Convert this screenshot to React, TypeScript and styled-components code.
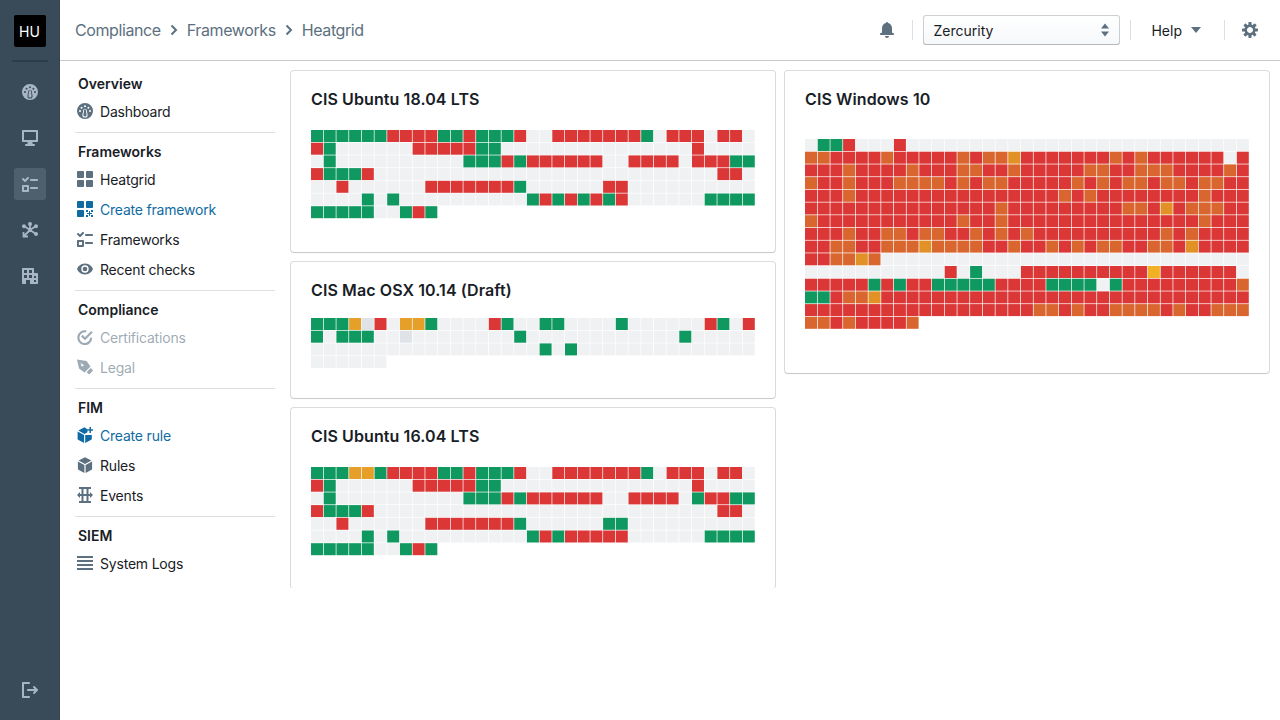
import React from "react";
import styled, { createGlobalStyle } from "styled-components";

const palette = {
  rail: "#394b59",
  railIcon: "#a7b6c2",
  text: "#182026",
  muted: "#5c7080",
  blue: "#106ba3",
  line: "#dde0e3",
};

const cellColors: Record<string, string> = {
  g: "#0f9960",
  r: "#db3737",
  o: "#d9652f",
  a: "#e29127",
  b: "#e69f28",
  y: "#f0b224",
  e: "#eff1f3",
  d: "#dfe3e8",
};

// rows are run-length coded: "3g1r" = three green, one red
const ubuntu18 = [
  "6g4r2g1r3g1r2e7r1g1e3r1e2r1e",
  "1r1g6e5r2g15e1r4e",
  "1e1g10e3g1r1g6r2e4r1e3r2g",
  "1r3g1r27e2r1e",
  "2e1r6e7r1g6e2r10e",
  "4e1g1e1g10e1g1r1g1r1g1r1g1r6e4g",
  "5g2e1g1r1g",
];

const macOsx = [
  "3g1b1d1r1e2b1g4e1r1g2e2g4e1g6e1r1g1e1r",
  "1g1e3g2e1d8e1g12e1g5e",
  "18e1g1e1g14e",
  "6e",
];

const ubuntu16 = [
  "3g2b1g4r2g1r3g1r2e7r1g1e3r1e2r1e",
  "1r1g6e5r2g15e1r4e",
  "1e1g10e3g1r1g6r2e4r1e1g2r2g",
  "1r3g1r27e2r1e",
  "2e1r6e7r1g6e2g10e",
  "4e1g1e1g10e1g1r1g5r6e4g",
  "5g2e1g1r1g",
];

const windows10 = [
  "1e2g1r3e1r27e",
  "2o4r1o5r1o1r2o1a7r1o1r1o6r1e1r",
  "3r1o4r1o3r2o2r1o5r2o2r3o4r1o1r",
  "1o2r1o3r4o1r1o1r2o5r1o1r1o1r2o1r2o1r2o2r",
  "3r1o16r1o1r1o8r1o3r",
  "15r1o9r2o1r1a1r3o2r",
  "1o11r1o2r1o15r1o3r",
  "3r1o2r2o1r2o2r1o1r1o1r1o10r1o1r1o4r",
  "2r2o2r3o1a4o2r1o2r1o1r1o1r2o2r2o1r1a4r",
  "2r2o1a1o29e",
  "11e1r1e1g3e10r1y6r1e",
  "5r1g1r1g2r5g4r4g1e1g9r1o",
  "2g1r2o1a29r",
  "18r2o1r1o2r4o1r1o2r3o",
  "2o1r1o4r1o",
];

const decodeRow = (row: string) =>
  Array.from(row.matchAll(/(\d+)([a-z])/g)).flatMap((m) =>
    Array<string>(Number(m[1])).fill(m[2])
  );

const PITCH = 12.7;
const CELL = 12;

const GlobalStyle = createGlobalStyle`
  html, body {
    margin: 0;
    height: 100%;
    background: #fff;
    font-family: Inter, "Liberation Sans", sans-serif;
    font-size: 14px;
    color: ${palette.text};
    overflow: hidden;
  }
`;

const Shell = styled.div`
  display: flex;
  height: 720px;
  overflow: hidden;
`;

const Rail = styled.aside`
  flex: 0 0 60px;
  box-sizing: border-box;
  display: flex;
  flex-direction: column;
  align-items: center;
  padding: 15px 0 14px;
  background: ${palette.rail};
  border-right: 1px solid #33434f;
`;

const Logo = styled.div`
  display: flex;
  align-items: center;
  justify-content: center;
  width: 32px;
  height: 32px;
  border-radius: 2px;
  background: #000;
  color: #fff;
  font-size: 14px;
`;

const RailDivider = styled.div`
  width: 36px;
  height: 2px;
  margin: 13px 0 14px;
  background: #2d3c47;
`;

const RailButton = styled.div<{ $active?: boolean; $bottom?: boolean }>`
  display: flex;
  align-items: center;
  justify-content: center;
  width: 32px;
  height: 32px;
  margin-bottom: ${(p) => (p.$bottom ? 0 : "14px")};
  margin-top: ${(p) => (p.$bottom ? "auto" : 0)};
  border-radius: 3px;
  color: ${palette.railIcon};
  background: ${(p) => (p.$active ? "rgba(167, 182, 194, 0.2)" : "transparent")};
`;

const Main = styled.div`
  flex: 1;
  min-width: 0;
  display: flex;
  flex-direction: column;
`;

const Header = styled.header`
  flex: 0 0 60px;
  display: flex;
  align-items: center;
  padding: 0 22px 0 15px;
  border-bottom: 1px solid #c8cbce;
`;

const Crumbs = styled.div`
  flex: 1;
  display: flex;
  align-items: center;
  gap: 7px;
  font-size: 16px;
  letter-spacing: -0.4px;
  color: ${palette.muted};
`;

const CrumbArrow = styled.svg`
  width: 12px;
  height: 12px;
  fill: none;
  stroke: ${palette.muted};
  stroke-width: 2;
`;

const BarIcon = styled.svg`
  display: block;
  width: 16px;
  height: 16px;
  fill: ${palette.muted};
`;

const BarDivider = styled.div<{ $left: number; $right: number }>`
  width: 1px;
  height: 20px;
  background: #dcdfe2;
  margin: 0 ${(p) => p.$right}px 0 ${(p) => p.$left}px;
`;

const Select = styled.div`
  box-sizing: border-box;
  display: flex;
  align-items: center;
  justify-content: space-between;
  width: 197px;
  height: 30px;
  padding: 0 10px;
  border-radius: 3px;
  background: linear-gradient(180deg, #fff, #f5f8fa);
  box-shadow: inset 0 0 0 1px rgba(16, 22, 26, 0.2),
    inset 0 -1px 0 rgba(16, 22, 26, 0.1);
`;

const DoubleCaret = styled.svg`
  width: 10px;
  height: 16px;
  fill: ${palette.muted};
`;

const HelpMenu = styled.div`
  display: flex;
  align-items: center;
  gap: 9px;
  padding: 0 23px 0 20px;
`;

const Caret = styled.svg`
  width: 10px;
  height: 6px;
  fill: ${palette.muted};
`;

const Body = styled.div`
  flex: 1;
  min-height: 0;
  display: flex;
`;

const SideNav = styled.nav`
  flex: 0 0 200px;
  padding: 4px 15px 0;
`;

const NavSection = styled.section`
  padding: 9px 0 6px;
  border-bottom: 1px solid ${palette.line};

  &:last-child {
    border-bottom: 0;
  }
`;

const NavHeading = styled.div`
  height: 20px;
  margin-bottom: 2px;
  padding-left: 3px;
  font-weight: 600;
  line-height: 20px;
`;

const NavItem = styled.div<{ $tone?: "link" | "off" }>`
  display: flex;
  align-items: center;
  gap: 7px;
  height: 30px;
  padding-left: 2px;
  letter-spacing: -0.2px;
  color: ${(p) =>
    p.$tone === "link"
      ? palette.blue
      : p.$tone === "off"
      ? "rgba(92, 112, 128, 0.6)"
      : palette.text};

  svg {
    display: block;
    flex: 0 0 16px;
    width: 16px;
    height: 16px;
    fill: ${(p) =>
      p.$tone === "link"
        ? palette.blue
        : p.$tone === "off"
        ? "rgba(92, 112, 128, 0.6)"
        : palette.muted};
  }
`;

const Content = styled.main`
  flex: 1;
  display: flex;
  align-items: flex-start;
  gap: 10px;
  padding: 10px 0 0 1px;
`;

const Column = styled.div`
  flex: 0 0 484px;
  display: flex;
  flex-direction: column;
  gap: 10px;
`;

const Card = styled.article<{ $cut?: boolean }>`
  box-sizing: border-box;
  padding: 18px 20px 0;
  border-radius: 3px;
  background: #fff;
  box-shadow: 0 0 0 1px rgba(16, 22, 26, 0.15),
    0 1px 1px rgba(16, 22, 26, 0.1);
  clip-path: ${(p) => (p.$cut ? "inset(-2px -2px 1px -2px)" : "none")};
`;

const CardTitle = styled.h3`
  margin: 0;
  font-size: 16px;
  font-weight: 600;
  line-height: 20px;
  letter-spacing: 0.1px;
`;

const Grid = styled.svg<{ $top: number; $bottom: number }>`
  display: block;
  width: 445px;
  margin: ${(p) => p.$top}px -1px ${(p) => p.$bottom}px 0;
`;

const HeatGrid = ({ rows, top, bottom }: { rows: string[]; top: number; bottom: number }) => {
  const h = rows.length * PITCH;
  return (
    <Grid $top={top} $bottom={bottom} viewBox={`0 0 445 ${h}`} height={h}>
      {rows.map((row, y) =>
        decodeRow(row).map((c, x) => (
          <rect
            key={`${y}-${x}`}
            x={x * PITCH}
            y={y * PITCH}
            width={CELL}
            height={CELL}
            fill={cellColors[c]}
          />
        ))
      )}
    </Grid>
  );
};

const dot = (x: number, y: number) => `M${x - 1} ${y}a1 1 0 102 0 1 1 0 10-2 0z`;

const icons: Record<string, React.ReactNode> = {
  dashboard: (
    <>
      <path
        fillRule="evenodd"
        d={`M8 0a8 8 0 100 16A8 8 0 008 0z${dot(3, 8)}${dot(4.6, 4.8)}${dot(8, 3.2)}${dot(11.4, 4.8)}${dot(13, 8)}M6.4 6.500h3.200l1 5.500a2.600 2.600 0 01-5.200 0z`}
      />
      <path d="M7.100 7h1.800l.7 5a1.600 1.600 0 01-3.200 0z" />
    </>
  ),
  desktop: (
    <path d="M15 0H1C.45 0 0 .45 0 1v10c0 .55.45 1 1 1h4.750l-.5 2H4c-.55 0-1 .45-1 1s.45 1 1 1h8c.55 0 1-.45 1-1s-.45-1-1-1h-1.250l-.5-2H15c.55 0 1-.45 1-1V1c0-.55-.45-1-1-1zm-1 10H2V2h12v8z" />
  ),
  form: (
    <path d="M2 11v3h3v-3H2zm-1-2h5c.55 0 1 .45 1 1v5c0 .55-.45 1-1 1H1c-.55 0-1-.45-1-1v-5c0-.55.45-1 1-1zm5.710-7.710C6.530 1.110 6.280 1 6 1s-.53.11-.71.29L3 3.590l-1.290-1.300C1.530 2.110 1.280 2 1 2a1.003 1.003 0 00-.71 1.710l2 2c.18.18.43.29.71.29s.53-.11.71-.29l3-3c.18-.18.29-.43.29-.71s-.11-.53-.29-.71zM9 5h6c.55 0 1-.45 1-1s-.45-1-1-1H9c-.55 0-1 .45-1 1s.45 1 1 1zm6 6H9c-.55 0-1 .45-1 1s.45 1 1 1h6c.55 0 1-.45 1-1s-.45-1-1-1z" />
  ),
  graph: (
    <>
      <circle cx="8" cy="2" r="2" />
      <circle cx="2" cy="4.200" r="2" />
      <circle cx="14" cy="4.200" r="2" />
      <circle cx="14" cy="12" r="2" />
      <circle cx="8" cy="8" r="1.800" />
      <path
        d="M8 2v6M2 4l6 4 6-4M8 8l6 4M8 8l-6 6M1.500 10v4.500h4.500"
        stroke="currentColor"
        strokeWidth="1.800"
        fill="none"
      />
    </>
  ),
  office: (
    <path d="M15 5h-3V1c0-.55-.45-1-1-1H1C.45 0 0 .45 0 1v14c0 .55.45 1 1 1h3v-4h4v4h7c.55 0 1-.45 1-1V6c0-.55-.45-1-1-1zM5 10H2V7h3v3zm0-5H2V2h3v3zm5 5H7V7h3v3zm0-5H7V2h3v3zm4 9h-2v-2h2v2zm0-4h-2V8h2v2z" />
  ),
  logout: (
    <path d="M7 14H2V2h5c.55 0 1-.45 1-1s-.45-1-1-1H1C.45 0 0 .45 0 1v14c0 .55.45 1 1 1h6c.55 0 1-.45 1-1s-.45-1-1-1zm8.710-6.710l-3-3a1.003 1.003 0 00-1.420 1.420L12.590 7H6c-.55 0-1 .45-1 1s.45 1 1 1h6.590l-1.290 1.290c-.19.18-.3.43-.3.71a1.003 1.003 0 001.710.71l3-3c.18-.18.29-.43.29-.71 0-.28-.11-.53-.29-.71z" />
  ),
  grid: (
    <path d="M1 0h5c.55 0 1 .45 1 1v5c0 .55-.45 1-1 1H1c-.55 0-1-.45-1-1V1c0-.55.45-1 1-1zm9 0h5c.55 0 1 .45 1 1v5c0 .55-.45 1-1 1h-5c-.55 0-1-.45-1-1V1c0-.55.45-1 1-1zM1 9h5c.55 0 1 .45 1 1v5c0 .55-.45 1-1 1H1c-.55 0-1-.45-1-1v-5c0-.55.45-1 1-1zm9 0h5c.55 0 1 .45 1 1v5c0 .55-.45 1-1 1h-5c-.55 0-1-.45-1-1v-5c0-.55.45-1 1-1z" />
  ),
  gridAdd: (
    <path d="M1 0h5c.55 0 1 .45 1 1v5c0 .55-.45 1-1 1H1c-.55 0-1-.45-1-1V1c0-.55.45-1 1-1zm9 0h5c.55 0 1 .45 1 1v5c0 .55-.45 1-1 1h-5c-.55 0-1-.45-1-1V1c0-.55.45-1 1-1zM1 9h5c.55 0 1 .45 1 1v5c0 .55-.45 1-1 1H1c-.55 0-1-.45-1-1v-5c0-.55.45-1 1-1zm8 0h2v2H9zm5 0h2v2h-2zM9 14h2v2H9zm5 0h2v2h-2zm-2-4h1v2h2v1h-2v2h-1v-2h-2v-1h2z" />
  ),
  eye: (
    <>
      <path
        fillRule="evenodd"
        d="M8 2.500C3.400 2.500.8 5.800 0 8c.8 2.200 3.400 5.500 8 5.500s7.200-3.300 8-5.500c-.8-2.200-3.400-5.500-8-5.500zm0 9.200a3.700 3.700 0 110-7.400 3.700 3.700 0 010 7.400z"
      />
      <circle cx="8" cy="8" r="2.300" />
    </>
  ),
  confirm: (
    <>
      <path
        d="M14.200 8.800a6.400 6.400 0 11-5-6.400"
        fill="none"
        stroke="currentColor"
        strokeWidth="2.200"
      />
      <path d="M4.800 6.600L8 9.800 15 2.800" fill="none" stroke="currentColor" strokeWidth="2.200" />
    </>
  ),
  draw: (
    <path
      fillRule="evenodd"
      d="M0 .5l9.500 1.500 4 5.500-6 6-5.500-4zm5.200 4.700l-2.800-2.800 2 2.800a1.300 1.300 0 101.800 0zM13.800 9l2.200 2.600-3.800 3.900-2.600-2.300z"
    />
  ),
  cube: (
    <path d="M8 .2L1.600 3.500 8 6.900l6.400-3.400zM.9 4.500V12c0 .3.2.6.5.8l6 3.100V8zM15.100 4.500L8.600 8v7.900l6-3.100c.3-.2.5-.5.5-.8z" />
  ),
  cubeAdd: (
    <path d="M7.500.2L1.300 3.500l6.200 3.400 3-1.700V3.300h1L7.500.2zM.6 4.500V12c0 .3.2.6.5.8l6 3.100V8zM14.800 8.100l-6.600-.1v7.900l6-3.100c.3-.2.6-.5.6-.8zM12.500 0H14v2.200h2v1.500h-2V6h-1.500V3.700h-2V2.200h2z" />
  ),
  events: (
    <path d="M2 0h12v2H2zm0 14h12v2H2zM4.500 0h2v16h-2zm5 0h2v16h-2zM3 7h10v2H3zm0-2v6L0 8zm10 0l3 3-3 3z" />
  ),
  logs: <path d="M0 1h16v2H0zm0 4h16v2H0zm0 4h16v2H0zm0 4h16v2H0z" />,
};

const RailIcon = styled.svg`
  display: block;
  width: 16px;
  height: 16px;
  fill: currentColor;
  color: ${palette.railIcon};
`;

const Glyph = ({ name }: { name: string }) => <svg viewBox="0 0 16 16">{icons[name]}</svg>;

const railItems = ["dashboard", "desktop", "form", "graph", "office"];

type NavLink = { label: string; icon: string; tone?: "link" | "off" };

const navSections: { title: string; links: NavLink[] }[] = [
  { title: "Overview", links: [{ label: "Dashboard", icon: "dashboard" }] },
  {
    title: "Frameworks",
    links: [
      { label: "Heatgrid", icon: "grid" },
      { label: "Create framework", icon: "gridAdd", tone: "link" },
      { label: "Frameworks", icon: "form" },
      { label: "Recent checks", icon: "eye" },
    ],
  },
  {
    title: "Compliance",
    links: [
      { label: "Certifications", icon: "confirm", tone: "off" },
      { label: "Legal", icon: "draw", tone: "off" },
    ],
  },
  {
    title: "FIM",
    links: [
      { label: "Create rule", icon: "cubeAdd", tone: "link" },
      { label: "Rules", icon: "cube" },
      { label: "Events", icon: "events" },
    ],
  },
  { title: "SIEM", links: [{ label: "System Logs", icon: "logs" }] },
];

const Arrow = () => (
  <CrumbArrow viewBox="0 0 12 12">
    <path d="M3.500 1.500L8 6l-4.500 4.500" />
  </CrumbArrow>
);

const App = () => {
  return (
    <Shell>
      <GlobalStyle />
      <Rail>
        <Logo>HU</Logo>
        <RailDivider />
        {railItems.map((name) => (
          <RailButton key={name} $active={name === "form"}>
            <RailIcon viewBox="0 0 16 16">{icons[name]}</RailIcon>
          </RailButton>
        ))}
        <RailButton $bottom>
          <RailIcon viewBox="0 0 16 16">{icons.logout}</RailIcon>
        </RailButton>
      </Rail>
      <Main>
        <Header>
          <Crumbs>
            <span>Compliance</span>
            <Arrow />
            <span>Frameworks</span>
            <Arrow />
            <span>Heatgrid</span>
          </Crumbs>
          <BarIcon viewBox="0 0 16 16">
            <path d="M8 16c1.100 0 2-.9 2-2H6c0 1.100.9 2 2 2zm6-5c-.55 0-1-.45-1-1V6c0-2.420-1.720-4.440-4.010-4.900.01-.03.01-.07.01-.1 0-.55-.45-1-1-1S7 .45 7 1v.1C4.720 1.560 3 3.580 3 6v4c0 .55-.45 1-1 1s-1 .45-1 1 .45 1 1 1h12c.55 0 1-.45 1-1s-.45-1-1-1z" />
          </BarIcon>
          <BarDivider $left={17} $right={10} />
          <Select>
            <span>Zercurity</span>
            <DoubleCaret viewBox="0 0 10 16">
              <path d="M5 1.500L9 6.500H1zM5 14.500L1 9.500h8z" />
            </DoubleCaret>
          </Select>
          <BarDivider $left={10} $right={0} />
          <HelpMenu>
            <span>Help</span>
            <Caret viewBox="0 0 10 6">
              <path d="M0 0h10L5 6z" />
            </Caret>
          </HelpMenu>
          <BarDivider $left={0} $right={17} />
          <BarIcon viewBox="0 0 16 16">
            <path d="M15.190 6.390h-1.850c-.11-.37-.27-.71-.45-1.040l1.360-1.360c.31-.31.31-.82 0-1.130l-1.130-1.130a.803.803 0 00-1.130 0l-1.360 1.360c-.33-.18-.67-.33-1.040-.44V.79c0-.44-.36-.8-.8-.8h-1.600c-.44 0-.8.36-.8.8v1.860c-.39.12-.75.28-1.100.47l-1.300-1.300c-.3-.3-.79-.3-1.090 0L1.820 2.910c-.3.3-.3.79 0 1.090l1.300 1.300c-.2.34-.36.7-.48 1.090H.79c-.44 0-.8.36-.8.8v1.600c0 .44.36.8.8.8h1.850c.11.37.27.71.45 1.040l-1.360 1.360c-.31.31-.31.82 0 1.130l1.130 1.130c.31.31.82.31 1.130 0l1.360-1.360c.33.18.67.33 1.040.44v1.860c0 .44.36.8.8.8h1.600c.44 0 .8-.36.8-.8v-1.860c.39-.12.75-.28 1.100-.47l1.300 1.300c.3.3.79.3 1.090 0l1.090-1.090c.3-.3.3-.79 0-1.090l-1.300-1.300c.19-.35.36-.71.48-1.100h1.850c.44 0 .8-.36.8-.8v-1.600a.816.816 0 00-.81-.79zm-7.200 4.600c-1.660 0-3-1.340-3-3s1.340-3 3-3 3 1.340 3 3-1.340 3-3 3z" />
          </BarIcon>
        </Header>
        <Body>
          <SideNav>
            {navSections.map((section) => (
              <NavSection key={section.title}>
                <NavHeading>{section.title}</NavHeading>
                {section.links.map((link) => (
                  <NavItem key={link.label} $tone={link.tone}>
                    <Glyph name={link.icon} />
                    {link.label}
                  </NavItem>
                ))}
              </NavSection>
            ))}
          </SideNav>
          <Content>
            <Column>
              <Card>
                <CardTitle>CIS Ubuntu 18.04 LTS</CardTitle>
                <HeatGrid rows={ubuntu18} top={21} bottom={33} />
              </Card>
              <Card>
                <CardTitle>CIS Mac OSX 10.14 (Draft)</CardTitle>
                <HeatGrid rows={macOsx} top={18} bottom={29} />
              </Card>
              <Card $cut>
                <CardTitle>CIS Ubuntu 16.04 LTS</CardTitle>
                <HeatGrid rows={ubuntu16} top={21} bottom={33} />
              </Card>
            </Column>
            <Column>
              <Card>
                <CardTitle>CIS Windows 10</CardTitle>
                <HeatGrid rows={windows10} top={30} bottom={43} />
              </Card>
            </Column>
          </Content>
        </Body>
      </Main>
    </Shell>
  );
};

export default App;
